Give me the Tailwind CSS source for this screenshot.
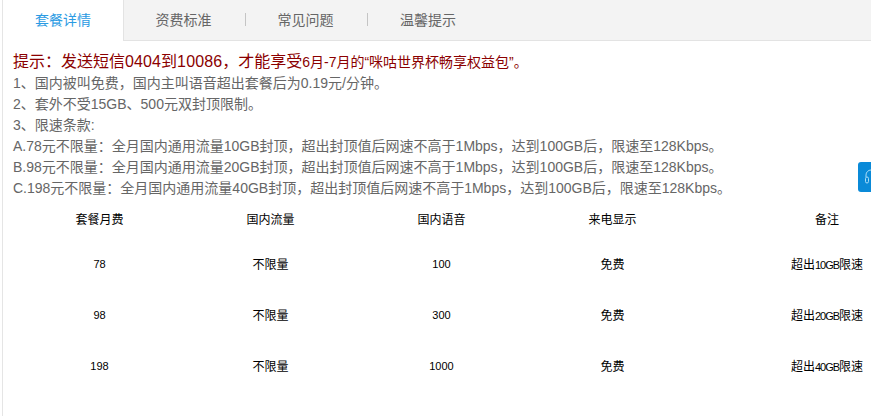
<!DOCTYPE html>
<html><head><meta charset="utf-8"><script src="https://cdn.jsdelivr.net/npm/@tailwindcss/browser@4"></script></head>
<body class="bg-white overflow-hidden">
<div class="relative w-[871px] h-[416px] overflow-hidden font-['Liberation_Sans','Noto_Sans_CJK_SC',sans-serif]">
  <div class="flex h-[41px] ml-[2px] bg-[#f3f3f3] border-b border-[#e3e3e3] text-[14px] text-[#666] border-l border-l-[#e5e5e5]">
    <div class="w-[121px] h-[41px] bg-white border-r border-[#e3e3e3] flex items-center justify-center text-[#2b9be3]">套餐详情</div>
    <div class="w-[121px] pr-[2px] flex items-center justify-center">资费标准</div>
    <div class="w-px h-[13px] bg-[#c4c4c4] mt-[13px]"></div>
    <div class="w-[121px] pr-[2px] flex items-center justify-center">常见问题</div>
    <div class="w-px h-[13px] bg-[#c4c4c4] mt-[13px]"></div>
    <div class="w-[120px] flex items-center justify-center">温馨提示</div>
  </div>
  <div class="ml-[2px] h-[375px] border-l border-[#e5e5e5] pl-[10px] pt-[10px]">
    <p class="text-[14px] leading-[21px] text-[#8b0000]"><span class="text-[16px]">提示：发送短信<span class="tracking-[0.12px]">0404</span>到<span class="tracking-[0.12px]">10086</span>，才能享受</span>6月-7月的“咪咕世界杯畅享权益包”。</p>
    <div class="text-[14px] leading-[21px] text-[#666]">
      <p>1、国内被叫免费，国内主叫语音超出套餐后为0.19元/分钟。</p>
      <p>2、套外不受15GB、500元双封顶限制。</p>
      <p>3、限速条款:</p>
      <p>A.78元不限量：全月国内通用流量10GB封顶，超出封顶值后网速不高于1Mbps，达到100GB后，限速至128Kbps。</p>
      <p>B.98元不限量：全月国内通用流量20GB封顶，超出封顶值后网速不高于1Mbps，达到100GB后，限速至128Kbps。</p>
      <p>C.198元不限量：全月国内通用流量40GB封顶，超出封顶值后网速不高于1Mbps，达到100GB后，限速至128Kbps。</p>
    </div>
    <div class="grid grid-cols-[171px_171px_171px_171px_258px] grid-rows-[39px_51px_51px_51px] w-[942px] ml-px mt-px text-[12px] text-black text-center items-center">
      <div>套餐月费</div><div>国内流量</div><div>国内语音</div><div>来电显示</div><div>备注</div>
      <div class="text-[11px]">78</div><div>不限量</div><div class="text-[11px]">100</div><div>免费</div><div>超出<span class="text-[11px] tracking-[-1px]">10GB</span>限速</div>
      <div class="text-[11px]">98</div><div>不限量</div><div class="text-[11px]">300</div><div>免费</div><div>超出<span class="text-[11px] tracking-[-1px]">20GB</span>限速</div>
      <div class="text-[11px]">198</div><div>不限量</div><div class="text-[11px]">1000</div><div>免费</div><div>超出<span class="text-[11px] tracking-[-1px]">40GB</span>限速</div>
    </div>
  </div>
  <div class="absolute left-[858px] top-[162px] w-[20px] h-[30px] rounded-[3px] bg-[#0a8ad8] flex items-center pl-[7px]">
    <svg width="12" height="16" viewBox="0 0 12 16" fill="none" stroke="#a9dcf7" stroke-width="1"><path d="M1 8V6a5 5 0 0 1 10 0v2"/><rect x="0.5" y="8" width="3" height="6" rx="1.5"/><rect x="8.5" y="8" width="3" height="6" rx="1.5"/></svg>
  </div>
</div>
</body></html>
